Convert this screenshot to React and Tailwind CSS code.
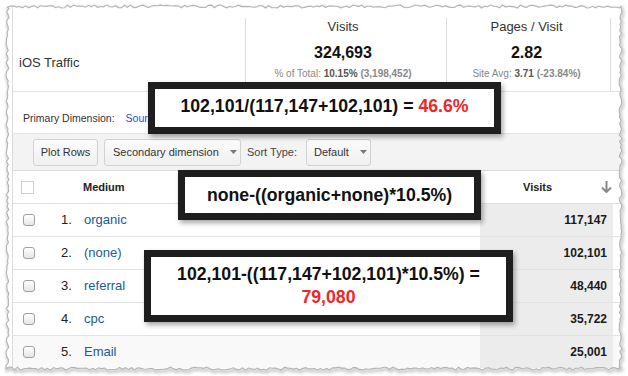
import React from "react";

const rnd = (n) => {
  const s = Math.sin(n * 91.345 + 7.13) * 43758.5453;
  return s - Math.floor(s);
};

// ragged "torn paper" outline around the screenshot
const tornPath = (x0, y0, x1, y1, step = 3, amp = 1.5) => {
  const pts = [];
  let k = 0;
  const j = () => (rnd(k++) - 0.5) * 2 * amp;
  for (let x = x0; x < x1; x += step) pts.push([x, y0 + j()]);
  for (let y = y0; y < y1; y += step) pts.push([x1 + j(), y]);
  for (let x = x1; x > x0; x -= step) pts.push([x, y1 + j()]);
  for (let y = y1; y > y0; y -= step) pts.push([x0 + j(), y]);
  return "M" + pts.map((p) => p[0].toFixed(1) + " " + p[1].toFixed(1)).join("L") + "Z";
};

const torn = tornPath(7.5, 6.5, 620.5, 368.5);
const outer = "M0 0H628V376H0Z";

const rows = [
  { n: "1.", label: "organic", visits: "117,147" },
  { n: "2.", label: "(none)", visits: "102,101" },
  { n: "3.", label: "referral", visits: "48,440" },
  { n: "4.", label: "cpc", visits: "35,722" },
  { n: "5.", label: "Email", visits: "25,001" },
];

const Caret = () => (
  <svg width="7" height="4" viewBox="0 0 7 4">
    <path d="M0 0H7L3.5 4Z" fill="#777" />
  </svg>
);

const Btn = ({ children, className = "" }) => (
  <div
    className={`h-[27px] flex items-center rounded-[3px] border border-[#d2d2d2] bg-gradient-to-b from-[#fcfcfc] to-[#efefef] text-[11px] text-[#333] ${className}`}
  >
    {children}
  </div>
);

const Box = ({ className, children }) => (
  <div
    className={`absolute flex flex-col items-center justify-center bg-white border-[7px] border-[#1e1e1e] shadow-[2px_3px_5px_rgba(0,0,0,0.35)] text-[17.7px] leading-[23px] font-bold text-[#111] ${className}`}
  >
    {children}
  </div>
);

export default function App() {
  return (
    <div className="relative w-[628px] h-[376px] bg-white overflow-hidden font-['Liberation_Sans',Arial,sans-serif]">
      <div className="ml-[8px] mt-[7px] w-[612px] h-[361px] overflow-hidden flex bg-white">
        <div className="w-[5px] shrink-0 border-r border-[#dcdcdc]" />
        <div className="flex-1 min-w-0 flex flex-col">
          {/* scorecard header */}
          <div className="h-[85px] shrink-0 flex border-b border-[#e3e3e3]">
            <div className="w-[232px] shrink-0 pl-[6px] pt-[48px] text-[13px] leading-[16px] text-[#333]">
              iOS Traffic
            </div>
            <div className="w-[201px] shrink-0 mt-[11px] border-l border-[#dedede] flex flex-col items-center pt-[1px] pr-[6px]">
              <div className="text-[13px] leading-[16px] text-[#333]">Visits</div>
              <div className="mt-[8px] text-[16px] leading-[20px] font-bold text-[#111]">324,693</div>
              <div className="mt-[4px] text-[10px] leading-[13px] text-[#888] whitespace-nowrap">
                % of Total: <b className="text-[#555]">10.15%</b> <b>(3,198,452)</b>
              </div>
            </div>
            <div className="w-[164px] shrink-0 mt-[11px] border-l border-[#dedede] flex flex-col items-center pt-[1px] pr-[4px]">
              <div className="text-[13px] leading-[16px] text-[#333]">Pages / Visit</div>
              <div className="mt-[8px] text-[16px] leading-[20px] font-bold text-[#111]">2.82</div>
              <div className="mt-[4px] text-[10px] leading-[13px] text-[#888] whitespace-nowrap">
                Site Avg: <b className="text-[#555]">3.71</b> <b>(-23.84%)</b>
              </div>
            </div>
            <div className="flex-1 mt-[11px] border-l border-[#dedede]" />
          </div>

          {/* primary dimension */}
          <div className="h-[42px] shrink-0 border-b border-[#e3e3e3] pl-[10px] pt-[19px] text-[10.5px] leading-[14px] text-[#333] whitespace-nowrap">
            Primary Dimension:<span className="ml-[11px] text-[#1155cc]">Source</span>
          </div>

          {/* toolbar */}
          <div className="h-[37px] shrink-0 bg-[#f3f3f3] border-b border-[#dcdcdc] flex items-center pl-[20px] whitespace-nowrap">
            <Btn className="w-[65px] justify-center">Plot Rows</Btn>
            <Btn className="ml-[6px] w-[137px] pl-[8px] gap-[11px]">
              Secondary dimension
              <Caret />
            </Btn>
            <span className="ml-[6px] text-[11px] text-[#444]">Sort Type:</span>
            <Btn className="ml-[9px] w-[65px] pl-[7px] gap-[11px]">
              Default
              <Caret />
            </Btn>
          </div>

          {/* table header */}
          <div className="h-[33px] shrink-0 flex border-b border-[#e0e0e0] bg-white">
            <div className="flex-1 flex items-center pl-[8px]">
              <div className="w-[13px] h-[13px] border border-[#cfcfcf] bg-white" />
              <span className="ml-[49px] text-[11px] font-bold text-[#222]">Medium</span>
            </div>
            <div className="w-[133px] shrink-0 flex items-center pl-[43px]">
              <span className="text-[11px] font-bold text-[#222]">Visits</span>
              <svg className="ml-[49px]" width="11" height="12" viewBox="0 0 11 12">
                <path d="M5.5 0V10.5M1 6.5L5.5 11L10 6.5" fill="none" stroke="#8a8a8a" strokeWidth="2" />
              </svg>
            </div>
            <div className="w-[7px] shrink-0" />
          </div>

          {/* rows */}
          {rows.map((r, i) => (
            <div
              key={r.n}
              className={`h-[33px] shrink-0 flex border-b border-[#e3e3e3] ${i === 4 ? "bg-[#f9f9f9]" : "bg-white"}`}
            >
              <div className="flex-1 flex items-center pl-[10px]">
                <div className="w-[12px] h-[12px] rounded-[3px] border border-[#a0a0a0] bg-gradient-to-b from-white to-[#e6e6e6]" />
                <span className="ml-[26px] w-[23px] text-[13px] text-[#222]">{r.n}</span>
                <span className="text-[13px] text-[#215a9a]">{r.label}</span>
              </div>
              <div className="w-[133px] shrink-0 bg-[#ececec] flex items-center justify-end pr-[6px] text-[12px] font-bold text-[#1a1a1a]">
                {r.visits}
              </div>
              <div className="w-[7px] shrink-0" />
            </div>
          ))}
        </div>
      </div>

      {/* torn edge + shadow */}
      <svg className="absolute inset-0 pointer-events-none" width="628" height="376" viewBox="0 0 628 376">
        <defs>
          <clipPath id="outside">
            <path d={outer + torn} clipRule="evenodd" />
          </clipPath>
          <filter id="soft" x="-5%" y="-5%" width="110%" height="110%">
            <feGaussianBlur stdDeviation="1.6" />
          </filter>
        </defs>
        <path d={outer + torn} fill="#fff" fillRule="evenodd" />
        <g clipPath="url(#outside)">
          <path d={torn} transform="translate(1 2)" fill="none" stroke="#000" strokeOpacity="0.22" strokeWidth="3" filter="url(#soft)" />
        </g>
        <path d={torn} fill="none" stroke="#b4b4b4" strokeWidth="1.1" />
      </svg>

      {/* annotation boxes */}
      <Box className="left-[148px] top-[82px] w-[353px] h-[52px] pb-[3px]">
        <div className="whitespace-nowrap">
          102,101/(117,147+102,101) = <span className="text-[#f2262a]">46.6%</span>
        </div>
      </Box>
      <Box className="left-[178px] top-[170px] w-[303px] h-[50px]">
        <div className="whitespace-nowrap">none-((organic+none)*10.5%)</div>
      </Box>
      <Box className="left-[144px] top-[250px] w-[369px] h-[72px]">
        <div className="whitespace-nowrap">102,101-((117,147+102,101)*10.5%) =</div>
        <div className="text-[#f2262a]">79,080</div>
      </Box>
    </div>
  );
}
